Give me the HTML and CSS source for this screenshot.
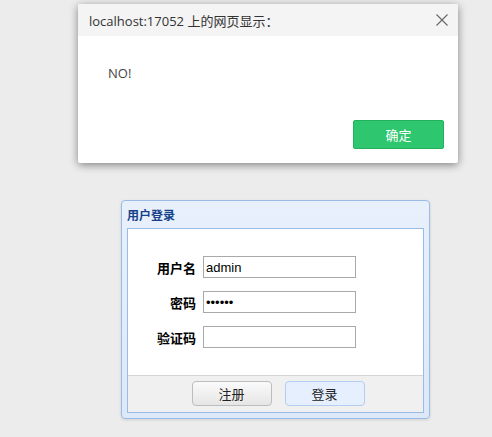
FILE: index.html
```html
<!DOCTYPE html>
<html lang="zh-CN">
<head>
<meta charset="utf-8">
<title>用户登录</title>
<link rel="stylesheet" href="styles.css">
</head>
<body>
<div class="panel">
  <div class="panel-title">用户登录</div>
  <div class="panel-body">
    <div class="form">
      <div class="row"><label class="lbl">用户名</label><input class="field" type="text" value="admin"></div>
      <div class="row"><label class="lbl">密码</label><input class="field" type="password" value="123456"></div>
      <div class="row"><label class="lbl">验证码</label><input class="field" type="text" value=""></div>
    </div>
    <div class="footer">
      <button class="btn btn-reg">注册</button>
      <button class="btn btn-login">登录</button>
    </div>
  </div>
</div>

<div class="dialog">
  <div class="dlg-head">
    <span class="dlg-title">localhost:17052 上的网页显示：</span>
    <svg class="dlg-close" width="12" height="12" viewBox="0 0 12 12"><path d="M0.5 0.5 L11.5 11.5 M11.5 0.5 L0.5 11.5" stroke="#666" stroke-width="1.1" fill="none"/></svg>
  </div>
  <div class="dlg-body">NO!</div>
  <div class="dlg-foot"><button class="dlg-ok">确定</button></div>
</div>
</body>
</html>
```

FILE: styles.css
```css
html, body {
  margin: 0;
  padding: 0;
}
body {
  background: #ececec;
  width: 492px;
  height: 437px;
  overflow: hidden;
  font-family: "Liberation Sans", "Noto Sans CJK SC", sans-serif;
  position: relative;
}

/* login panel */
.panel {
  margin: 200px 0 0 121px;
  width: 297px;
  padding: 0 5px 5px 5px;
  border: 1px solid #99bbe8;
  border-radius: 4px;
  background: linear-gradient(#e8f0fc, #dde8f8);
  box-shadow: 0 1px 3px rgba(0,0,0,0.12);
}
.panel-title {
  height: 27px;
  line-height: 27px;
  font-size: 12px;
  font-weight: bold;
  color: #15428b;
  font-family: "Noto Sans CJK SC", sans-serif;
}
.panel-body {
  border: 1px solid #99bbe8;
  background: #fff;
}
.form {
  height: 146px;
  padding-top: 27px;
  box-sizing: border-box;
  display: flex;
  flex-direction: column;
  gap: 13px;
}
.row {
  display: flex;
  align-items: center;
  height: 22px;
}
.lbl {
  width: 68px;
  text-align: right;
  font-size: 13px;
  font-weight: bold;
  color: #000;
  font-family: "Noto Sans CJK SC", sans-serif;
  margin-right: 7px;
}
.field {
  width: 153px;
  height: 22px;
  box-sizing: border-box;
  border: 1px solid #a9a9a9;
  padding: 0 2px;
  margin: 0;
  font-size: 13px;
  font-family: "Liberation Sans", sans-serif;
  color: #000;
  outline: none;
}
.footer {
  border-top: 1px solid #d4d4d4;
  background: #f0f0f0;
  height: 37px;
  display: flex;
  justify-content: center;
  gap: 13px;
  padding: 5px 0 0 5px;
  box-sizing: border-box;
}
.btn {
  width: 80px;
  height: 25px;
  border-radius: 4px;
  font-size: 13px;
  font-family: "Noto Sans CJK SC", sans-serif;
  color: #222;
  padding: 0;
  margin: 0;
}
.btn-reg {
  border: 1px solid #bdbdbd;
  background: linear-gradient(#fafafa, #e6e6e6);
}
.btn-login {
  border: 1px solid #b4cdf0;
  background: #e6effd;
}

/* modal dialog */
.dialog {
  position: absolute;
  left: 78px;
  top: 4px;
  width: 380px;
  height: 159px;
  background: #fff;
  border-radius: 2px;
  box-shadow: 0 2px 8px rgba(0,0,0,0.45);
  display: flex;
  flex-direction: column;
}
.dlg-head {
  height: 32px;
  background: #f4f4f4;
  display: flex;
  align-items: center;
  justify-content: space-between;
  padding: 0 10px 0 11px;
  border-radius: 2px 2px 0 0;
}
.dlg-title {
  font-family: "Open Sans", "Noto Sans CJK SC", sans-serif;
  font-size: 13px;
  color: #333;
}
.dlg-close {
  display: block;
}
.dlg-body {
  padding: 28px 0 0 30px;
  font-family: "Open Sans", sans-serif;
  font-size: 13px;
  color: #444;
  flex: 1;
}
.dlg-foot {
  display: flex;
  justify-content: flex-end;
  padding: 0 14px 14px 0;
}
.dlg-ok {
  width: 91px;
  height: 29px;
  background: #2ec66e;
  border: 1px solid #22b25c;
  border-radius: 2px;
  color: #fff;
  font-size: 13px;
  font-family: "Noto Sans CJK SC", sans-serif;
  padding: 0;
}
```
